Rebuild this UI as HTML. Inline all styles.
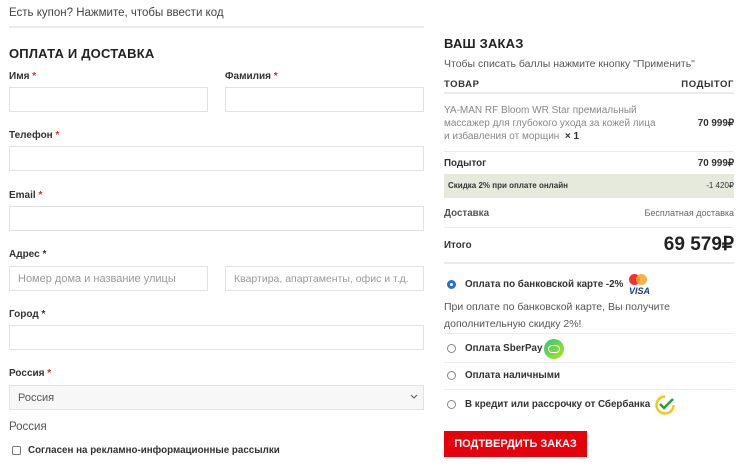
<!DOCTYPE html>
<html><head><meta charset="utf-8"><style>
*{margin:0;padding:0;box-sizing:border-box}
body{width:752px;height:467px;background:#fff;font-family:"Liberation Sans",sans-serif;color:#333;position:relative;overflow:hidden}
.a{position:absolute;white-space:nowrap}
.r{position:absolute;white-space:nowrap;right:18px;text-align:right}
.lbl{font-size:10px;font-weight:bold;color:#333;margin-top:1px}
.lbl i{color:#c0392b;font-style:normal}
.inp{position:absolute;border:1px solid #e2e2e2;background:#fff;height:25px}
.ph{font-size:11px;color:#999;padding:6px 0 0 8px;white-space:nowrap;overflow:hidden}
.hl{position:absolute;height:2px;background:#ebebeb}
.sl{position:absolute;height:1px;background:#ebebeb}
.radio{position:absolute;width:9px;height:9px;border:1px solid #888;border-radius:50%;background:#fff}
.b{font-weight:bold;font-size:9.8px;color:#333;margin-top:1px}
</style></head><body>
<div class="a" style="left:9px;top:7px;font-size:11.5px;color:#444">Есть купон? Нажмите, чтобы ввести код</div>
<div class="hl" style="left:9px;top:26px;width:415px"></div>
<div class="a" style="left:9px;top:46px;font-size:13px;font-weight:bold;color:#222;letter-spacing:.2px">ОПЛАТА И ДОСТАВКА</div>

<div class="a lbl" style="left:9px;top:70px">Имя <i>*</i></div>
<div class="a lbl" style="left:225px;top:70px">Фамилия <i>*</i></div>
<div class="inp" style="left:9px;top:87px;width:199px"></div>
<div class="inp" style="left:225px;top:87px;width:199px"></div>

<div class="a lbl" style="left:9px;top:129px">Телефон <i>*</i></div>
<div class="inp" style="left:9px;top:146px;width:415px"></div>

<div class="a lbl" style="left:9px;top:189px">Email <i>*</i></div>
<div class="inp" style="left:9px;top:206px;width:415px"></div>

<div class="a lbl" style="left:9px;top:248px">Адрес <i style="color:#333">*</i></div>
<div class="inp ph" style="left:9px;top:266px;width:199px">Номер дома и название улицы</div>
<div class="inp ph" style="left:225px;top:266px;width:199px;font-size:10.5px">Квартира, апартаменты, офис и т.д.</div>

<div class="a lbl" style="left:9px;top:308px">Город <i style="color:#333">*</i></div>
<div class="inp" style="left:9px;top:325px;width:415px"></div>

<div class="a lbl" style="left:9px;top:367px">Россия <i>*</i></div>
<div class="inp ph" style="left:9px;top:385px;width:415px;background:#f7f7f7;color:#555">Россия</div>
<svg class="a" style="left:410px;top:394px" width="8" height="6" viewBox="0 0 8 6"><path d="M1 1l3 3 3-3" fill="none" stroke="#666" stroke-width="1.2"/></svg>
<div class="a" style="left:9px;top:421px;font-size:11.5px;color:#555">Россия</div>
<div class="a" style="left:12px;top:446px;width:9px;height:9px;border:1px solid #777;border-radius:2px"></div>
<div class="a b" style="left:28px;top:444px">Согласен на рекламно-информационные рассылки</div>

<!-- right -->
<div class="a" style="left:444px;top:36px;font-size:13px;font-weight:bold;color:#222;letter-spacing:.2px">ВАШ ЗАКАЗ</div>
<div class="a" style="left:444px;top:58px;font-size:10.5px;color:#555">Чтобы списать баллы нажмите кнопку "Применить"</div>
<div class="a b" style="left:444px;top:78px;font-size:9.5px;letter-spacing:.6px">ТОВАР</div>
<div class="r b" style="top:78px;font-size:9.5px;letter-spacing:.6px">ПОДЫТОГ</div>
<div class="hl" style="left:444px;top:92px;width:290px"></div>
<div class="a" style="left:444px;top:104px;font-size:10px;color:#888;line-height:13px">YA-MAN RF Bloom WR Star премиальный<br>массажер для глубокого ухода за кожей лица<br>и избавления от морщин &nbsp;<b style="color:#333">× 1</b></div>
<div class="r b" style="top:117px">70 999₽</div>
<div class="sl" style="left:444px;top:151px;width:290px"></div>
<div class="a b" style="left:444px;top:157px">Подытог</div>
<div class="r b" style="top:157px">70 999₽</div>
<div class="a" style="left:444px;top:174px;width:290px;height:24px;background:#e5eadd"></div>
<div class="a b" style="left:448px;top:180px;font-size:8px">Скидка 2% при оплате онлайн</div>
<div class="r" style="top:181px;font-size:8px;color:#333">-1 420₽</div>
<div class="a b" style="left:444px;top:207px;color:#555">Доставка</div>
<div class="r" style="top:208px;font-size:9px;color:#666">Бесплатная доставка</div>
<div class="sl" style="left:444px;top:227px;width:290px"></div>
<div class="a b" style="left:444px;top:239px">Итого</div>
<div class="r" style="top:233px;font-size:19px;font-weight:bold;color:#222">69 579₽</div>
<div class="hl" style="left:444px;top:262px;width:290px"></div>

<div class="radio" style="left:447px;top:280px;border:3px solid #1e6fe0"></div>
<div class="a b" style="left:465px;top:278px">Оплата по банковской карте -2%</div>
<div class="a" style="left:629px;top:274px;width:11px;height:11px;border-radius:50%;background:#e33"></div>
<div class="a" style="left:636px;top:274px;width:11px;height:11px;border-radius:50%;background:#f5a623;opacity:.85"></div>
<div class="a" style="left:629px;top:286px;font-size:9px;font-weight:bold;font-style:italic;color:#1a3b8f">VISA</div>
<div class="a" style="left:444px;top:299px;font-size:10.5px;color:#555;line-height:17px">При оплате по банковской карте, Вы получите<br>дополнительную скидку 2%!</div>
<div class="sl" style="left:444px;top:333px;width:290px"></div>
<div class="radio" style="left:447px;top:344px"></div>
<div class="a b" style="left:465px;top:342px">Оплата SberPay</div>
<div class="a" style="left:544px;top:339px;width:20px;height:20px;border-radius:50%;background:linear-gradient(135deg,#2ec27e,#b5e61d)"></div>
<div class="a" style="left:548px;top:345px;width:12px;height:8px;border:1px solid #fff;border-radius:4px"></div>
<div class="sl" style="left:444px;top:362px;width:290px"></div>
<div class="radio" style="left:447px;top:371px"></div>
<div class="a b" style="left:465px;top:369px">Оплата наличными</div>
<div class="sl" style="left:444px;top:389px;width:290px"></div>
<div class="radio" style="left:447px;top:400px"></div>
<div class="a b" style="left:465px;top:398px">В кредит или рассрочку от Сбербанка</div>
<svg class="a" style="left:654px;top:394px" width="22" height="22" viewBox="0 0 22 22"><circle cx="11" cy="11" r="8.5" fill="none" stroke="#f2c811" stroke-width="2.5" stroke-dasharray="40 14"/><path d="M6 10l4 4 9-9" fill="none" stroke="#21a038" stroke-width="2.5"/></svg>
<div class="a" style="left:444px;top:431px;width:143px;height:26px;background:#e8000b;color:#fff;font-weight:bold;font-size:11px;text-align:center;line-height:26px">ПОДТВЕРДИТЬ ЗАКАЗ</div>
</body></html>
